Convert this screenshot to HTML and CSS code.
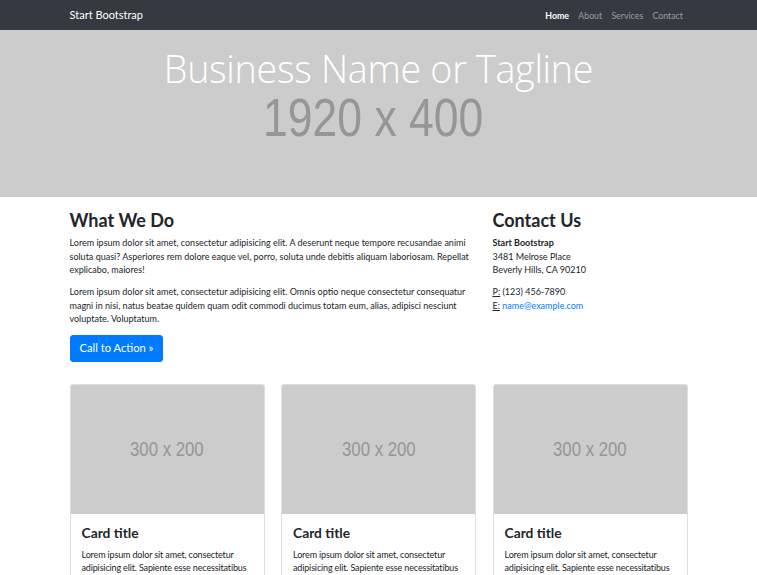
FILE: index.html
```
<!DOCTYPE html>
<html lang="en">
<head>
<meta charset="utf-8">
<title>Business Frontpage - Start Bootstrap</title>
<link rel="stylesheet" href="styles.css">
</head>
<body>
<nav class="navbar">
  <div class="container nav-inner">
    <a class="brand" href="#">Start Bootstrap</a>
    <ul class="nav-links">
      <li><a class="nav-link active" href="#">Home</a></li>
      <li><a class="nav-link" href="#">About</a></li>
      <li><a class="nav-link" href="#">Services</a></li>
      <li><a class="nav-link" href="#">Contact</a></li>
    </ul>
  </div>
</nav>

<header class="hero">
  <h1 class="hero-title">Business Name or Tagline</h1>
  <div class="placeholder-text hero-size"><span>1920 x 400</span></div>
</header>

<main class="container">
  <div class="intro">
    <section class="what">
      <h2>What We Do</h2>
      <p>Lorem ipsum dolor sit amet, consectetur adipisicing elit. A deserunt neque tempore recusandae animi soluta quasi? Asperiores rem dolore eaque vel, porro, soluta unde debitis aliquam laboriosam. Repellat explicabo, maiores!</p>
      <p>Lorem ipsum dolor sit amet, consectetur adipisicing elit. Omnis optio neque consectetur consequatur magni in nisi, natus beatae quidem quam odit commodi ducimus totam eum, alias, adipisci nesciunt voluptate. Voluptatum.</p>
      <a class="btn" href="#">Call to Action &raquo;</a>
    </section>
    <section class="contact">
      <h2>Contact Us</h2>
      <address>
        <strong>Start Bootstrap</strong><br>
        3481 Melrose Place<br>
        Beverly Hills, CA 90210
      </address>
      <address>
        <abbr title="Phone">P:</abbr> (123) 456-7890<br>
        <abbr title="Email">E:</abbr> <a href="#">name@example.com</a>
      </address>
    </section>
  </div>

  <div class="cards">
    <div class="card">
      <div class="card-img placeholder-text"><span>300 x 200</span></div>
      <div class="card-body">
        <h4>Card title</h4>
        <p>Lorem ipsum dolor sit amet, consectetur adipisicing elit. Sapiente esse necessitatibus neque sequi doloribus.</p>
      </div>
    </div>
    <div class="card">
      <div class="card-img placeholder-text"><span>300 x 200</span></div>
      <div class="card-body">
        <h4>Card title</h4>
        <p>Lorem ipsum dolor sit amet, consectetur adipisicing elit. Sapiente esse necessitatibus neque sequi doloribus totam ut praesentium aut.</p>
      </div>
    </div>
    <div class="card">
      <div class="card-img placeholder-text"><span>300 x 200</span></div>
      <div class="card-body">
        <h4>Card title</h4>
        <p>Lorem ipsum dolor sit amet, consectetur adipisicing elit. Sapiente esse necessitatibus neque.</p>
      </div>
    </div>
  </div>
</main>
</body>
</html>
```
FILE: styles.css
```
* { box-sizing: border-box; }

html, body {
  margin: 0;
  padding: 0;
}

body {
  font-family: Lato, "Open Sans", sans-serif;
  font-size: 9px;
  line-height: 13.4px;
  color: #212529;
  background: #fff;
  overflow: hidden;
}

a { text-decoration: none; color: #007bff; }

.container {
  width: 618px;
  margin: 0 auto;
}

/* navbar */
.navbar {
  background: #343a40;
  height: 30px;
}
.nav-inner {
  height: 30px;
  display: flex;
  align-items: center;
  justify-content: space-between;
}
.brand {
  color: #fff;
  font-size: 11px;
}
.nav-links {
  list-style: none;
  margin: 1px 0 0;
  padding: 0;
  display: flex;
}
.nav-link {
  display: block;
  padding: 0 4.6px;
  font-size: 8.8px;
  color: rgba(255, 255, 255, 0.5);
}
.nav-link.active {
  color: #fff;
  font-weight: 700;
}

/* hero */
.hero {
  background: #cccccc;
  height: 167px;
  display: flex;
  flex-direction: column;
  align-items: center;
  padding-top: 19px;
}
.hero-title {
  margin: 0;
  font-family: "Open Sans", sans-serif;
  font-weight: 300;
  font-size: 37.7px;
  line-height: 40px;
  color: #fff;
  letter-spacing: -0.3px;
}
.placeholder-text {
  font-family: "Liberation Sans", Arial, sans-serif;
  color: #969696;
  display: flex;
  justify-content: center;
  align-items: center;
}
.placeholder-text span {
  display: inline-block;
  transform: scaleX(0.84);
}
.hero-size {
  font-size: 53px;
  line-height: 44px;
  margin-top: 7px;
  padding-right: 10px;
}

/* intro */
.intro {
  display: grid;
  grid-template-columns: 407px 195px;
  column-gap: 16px;
  padding-top: 13.4px;
}
h2 {
  font-size: 18px;
  line-height: 21.4px;
  font-weight: 700;
  margin: 0 0 4.5px;
}
.what p {
  margin: 0 0 8.9px;
}
.btn {
  display: inline-block;
  background: #007bff;
  color: #fff;
  border: 1px solid #007bff;
  border-radius: 3px;
  font-size: 11.2px;
  line-height: 16.7px;
  padding: 4.5px 9px;
}
address {
  font-style: normal;
  margin: 0 0 8.9px;
}
address strong { font-weight: 700; }
abbr {
  text-decoration: underline;
  cursor: help;
}

/* cards */
.cards {
  display: grid;
  grid-template-columns: repeat(3, 195px);
  column-gap: 16.5px;
  margin-top: 22px;
}
.card {
  border: 1px solid rgba(0, 0, 0, 0.125);
  border-radius: 2.5px;
  overflow: hidden;
  height: 260px;
}
.card-img {
  height: 129px;
  background: #cccccc;
  font-size: 19.5px;
}
.card-img span {
  transform: scaleX(0.86);
}
.card-body {
  padding: 11px;
}
.card-body h4 {
  margin: 0 0 6.7px;
  font-size: 13.8px;
  line-height: 16px;
  font-weight: 700;
}
.card-body p {
  margin: 0;
  letter-spacing: -0.15px;
}
```
